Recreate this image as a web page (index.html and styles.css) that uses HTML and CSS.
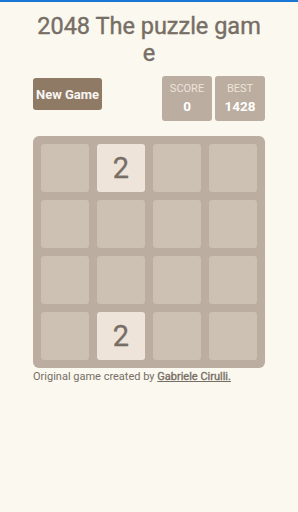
FILE: index.html
```html
<!DOCTYPE html>
<html lang="en">
<head>
    <meta charset="UTF-8">
    <meta name="viewport" content="width=device-width, initial-scale=1.0">
    <title>2048</title>
    <link rel="stylesheet" href="styles.css">
</head>
<body>
<div class="container">
    <h1 class="title">2048 The puzzle game</h1>

    <div class="header">
        <button class="new_game">New Game</button>
        <div class="scores">
            <div class="score_box">
                <div class="label">SCORE</div>
                <div class="value">0</div>
            </div>
            <div class="score_box">
                <div class="label">BEST</div>
                <div class="value">1428</div>
            </div>
        </div>
    </div>

    <div class="board">
        <div class="cell"></div>
        <div class="cell tile_2">2</div>
        <div class="cell"></div>
        <div class="cell"></div>

        <div class="cell"></div>
        <div class="cell"></div>
        <div class="cell"></div>
        <div class="cell"></div>

        <div class="cell"></div>
        <div class="cell"></div>
        <div class="cell"></div>
        <div class="cell"></div>

        <div class="cell"></div>
        <div class="cell tile_2">2</div>
        <div class="cell"></div>
        <div class="cell"></div>
    </div>

    <p class="credit">Original game created by <a href="#">Gabriele Cirulli.</a></p>
</div>
</body>
</html>
```

FILE: styles.css
```css
body {
    font-family: Roboto, "Liberation Sans", sans-serif;
    margin: 0;
    padding: 0;
    background-color: #faf8ef;
    border-top: 2px solid #1976d2;
    color: #776e65;
}

.container {
    width: 232px;
    margin: 0 auto;
}

.title {
    margin: 11px 0 0;
    font-size: 23.5px;
    font-weight: 400;
    line-height: 27px;
    text-align: center;
    word-break: break-all;
    -webkit-text-stroke: 0.4px #776e65;
}

.header {
    display: flex;
    justify-content: space-between;
    align-items: flex-start;
    margin-top: 9px;
}

.new_game {
    margin-top: 2px;
    width: 69px;
    height: 32px;
    padding: 0;
    border: none;
    border-radius: 3px;
    background-color: #8f7a66;
    color: #f9f6f2;
    font-family: inherit;
    font-size: 13px;
    font-weight: 700;
}

.scores {
    display: flex;
    gap: 3px;
}

.score_box {
    width: 50px;
    height: 45px;
    border-radius: 3px;
    background-color: #bbada0;
    text-align: center;
    box-sizing: border-box;
    padding-top: 6px;
}

.score_box .label {
    font-size: 11px;
    line-height: 13px;
    color: #eee4da;
}

.score_box .value {
    margin-top: 3px;
    font-size: 13.5px;
    font-weight: 700;
    line-height: 16px;
    color: #fff;
}

.board {
    margin-top: 15px;
    padding: 8px;
    display: grid;
    grid-template-columns: repeat(4, 48px);
    grid-auto-rows: 48px;
    gap: 8px;
    background-color: #bbada0;
    border-radius: 6px;
}

.cell {
    border-radius: 3px;
    background-color: #cdc1b4;
    display: flex;
    align-items: center;
    justify-content: center;
    font-size: 29px;
    font-weight: 400;
}

.tile_2 {
    background-color: #eee4da;
    color: #776e65;
    -webkit-text-stroke: 0.3px #776e65;
}

.credit {
    margin: 2px 0 0;
    font-size: 11px;
    line-height: 14px;
}

.credit a {
    color: #776e65;
    -webkit-text-stroke: 0.35px #776e65;
}
```
